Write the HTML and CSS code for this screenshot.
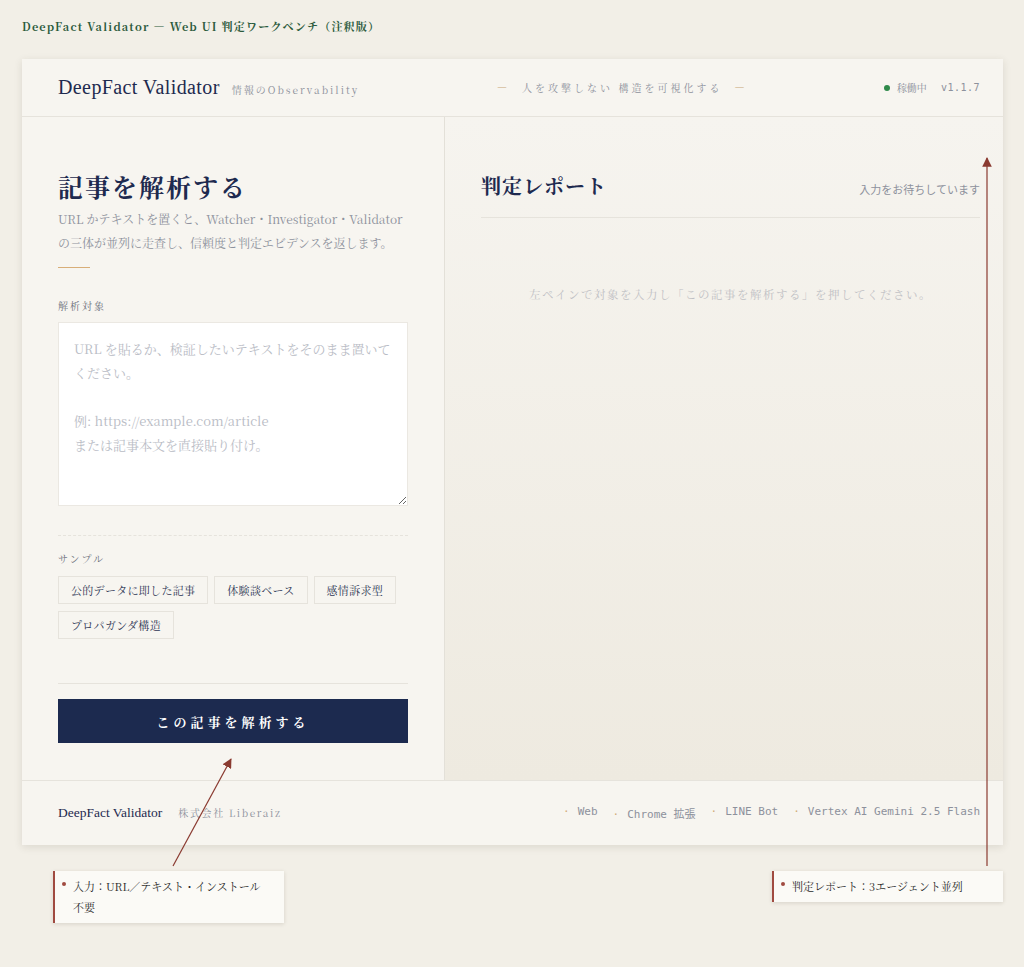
FILE: index.html
```html
<!DOCTYPE html>
<html lang="ja">
<head>
    <meta charset="UTF-8">
    <meta name="viewport" content="width=device-width, initial-scale=1.0">
    <title>DeepFact Validator</title>
    <link rel="stylesheet" href="styles.css">
</head>
<body>

<div class="page">
    <div class="caption">DeepFact Validator — Web UI 判定ワークベンチ（注釈版）</div>

    <div class="card">
        <!-- ヘッダー -->
        <header class="header">
            <div class="brand">
                <span class="logo">DeepFact Validator</span>
                <span class="sub">情報のObservability</span>
            </div>
            <div class="tagline"><span class="dash first">—</span>人を攻撃しない 構造を可視化する<span class="dash">—</span></div>
            <div class="status">
                <span class="dot"></span>
                <span class="live">稼働中</span>
                <span class="ver">v1.1.7</span>
            </div>
        </header>

        <div class="main">
            <!-- 左側：入力 -->
            <section class="pane left">
                <h1>記事を解析する</h1>
                <p class="lead">URL かテキストを置くと、Watcher・Investigator・Validator の三体が並列に走査し、信頼度と判定エビデンスを返します。</p>
                <div class="rule"></div>

                <div class="label">解析対象</div>
                <textarea class="input" placeholder="URL を貼るか、検証したいテキストをそのまま置いてください。&#10;&#10;例: https://example.com/article&#10;または記事本文を直接貼り付け。"></textarea>

                <div class="sep dashed"></div>

                <div class="label">サンプル</div>
                <div class="chips">
                    <button class="chip">公的データに即した記事</button>
                    <button class="chip">体験談ベース</button>
                    <button class="chip">感情訴求型</button>
                    <button class="chip">プロパガンダ構造</button>
                </div>

                <div class="sep solid"></div>
                <button class="run">この記事を解析する</button>
            </section>

            <!-- 右側：レポート -->
            <section class="pane right">
                <div class="report-head">
                    <h2>判定レポート</h2>
                    <span class="wait">入力をお待ちしています</span>
                </div>
                <p class="empty">左ペインで対象を入力し「この記事を解析する」を押してください。</p>
            </section>
        </div>

        <!-- フッター -->
        <footer class="footer">
            <div class="foot-brand">
                <span class="foot-logo">DeepFact Validator</span>
                <span class="company">株式会社 Liberaiz</span>
            </div>
            <ul class="channels">
                <li>Web</li>
                <li>Chrome 拡張</li>
                <li>LINE Bot</li>
                <li>Vertex AI Gemini 2.5 Flash</li>
            </ul>
        </footer>
    </div>

    <!-- 注釈 -->
    <svg class="arrows" width="1024" height="967" viewBox="0 0 1024 967">
        <defs>
            <marker id="head" viewBox="0 0 10 10" refX="9" refY="5" markerWidth="8" markerHeight="8" orient="auto">
                <path d="M0 0 L10 5 L0 10 z" fill="#8a3a30"/>
            </marker>
        </defs>
        <line x1="173" y1="866" x2="231" y2="759" stroke="#8a3a30" stroke-width="1.2" marker-end="url(#head)"/>
        <line x1="987" y1="866" x2="987" y2="158" stroke="#8a3a30" stroke-width="1.2" marker-end="url(#head)"/>
    </svg>
    <div class="note note-input">入力：URL／テキスト・インストール不要</div>
    <div class="note note-report">判定レポート：3エージェント並列</div>
</div>

</body>
</html>
```

FILE: styles.css
```css
* {
    margin: 0;
    padding: 0;
    box-sizing: border-box;
}
body {
    background-color: #f2efe7;
    color: #1c2a4f;
    font-family: "Noto Serif CJK JP", "Liberation Serif", "Noto Sans CJK JP", serif;
}
.page {
    position: relative;
    width: 1024px;
    height: 967px;
    padding: 18px 21px 0 22px;
}
.caption {
    font-size: 11px;
    font-weight: bold;
    letter-spacing: 1.2px;
    color: #2b5a3c;
    line-height: 16px;
}
.card {
    margin-top: 25px;
    background: #f7f5f0;
    box-shadow: 0 2px 8px rgba(60, 50, 30, 0.12);
    display: flex;
    flex-direction: column;
    height: 786px;
}

/* ヘッダー */
.header {
    height: 58px;
    border-bottom: 1px solid #e6e3dc;
    display: flex;
    align-items: center;
    padding: 0 23px 0 36px;
}
.brand {
    display: flex;
    align-items: baseline;
    gap: 12px;
    width: 439px;
}
.logo {
    font-family: "Liberation Serif", serif;
    font-size: 20px;
    letter-spacing: 0.4px;
    color: #1e2a4f;
}
.sub {
    font-size: 10px;
    letter-spacing: 2px;
    color: #8d919c;
}
.tagline {
    font-size: 10px;
    letter-spacing: 3px;
    color: #8d919c;
}
.tagline .dash {
    color: #c9a878;
    margin: 0 12px;
}
.tagline .dash.first {
    margin-left: 0;
}
.status {
    margin-left: auto;
    display: flex;
    align-items: center;
    font-size: 10px;
    color: #8d919c;
}
.dot {
    width: 6px;
    height: 6px;
    border-radius: 50%;
    background: #2f8a4a;
    margin-right: 7px;
}
.ver {
    font-family: "DejaVu Sans Mono", monospace;
    font-size: 10px;
    margin-left: 14px;
    letter-spacing: 0.5px;
}

/* メイン */
.main {
    flex: 1;
    display: flex;
}
.pane.left {
    width: 423px;
    border-right: 1px solid #e3e0d8;
    padding: 52px 36px 0 36px;
}
h1 {
    font-size: 25px;
    font-weight: bold;
    letter-spacing: 2px;
    line-height: 34px;
    color: #1e2a4f;
}
.lead {
    margin-top: 4px;
    font-size: 12px;
    line-height: 24px;
    color: #8d919c;
}
.rule {
    width: 32px;
    height: 1px;
    background: #d8ae78;
    margin-top: 12px;
}
.label {
    margin-top: 30px;
    font-size: 10px;
    letter-spacing: 2px;
    color: #6d717c;
}
.input {
    display: block;
    width: 100%;
    height: 184px;
    margin-top: 9px;
    padding: 14px 15px;
    border: 1px solid #ebe8e2;
    background: #fff;
    font-family: inherit;
    font-size: 13px;
    line-height: 24px;
    color: #1e2a4f;
}
.input::placeholder {
    color: #b9bcc5;
}
.sep {
    margin-top: 29px;
    border-top: 1px solid #e6e3dc;
}
.sep.dashed {
    border-top-style: dashed;
}
.sep + .label {
    margin-top: 15px;
}
.chips {
    display: flex;
    flex-wrap: wrap;
    gap: 7px 6px;
    margin-top: 10px;
}
.chip {
    height: 28px;
    padding: 0 12px;
    border: 1px solid #e6e3dc;
    background: #f7f5f0;
    font-family: inherit;
    font-size: 11px;
    letter-spacing: 0.3px;
    color: #2e3654;
    cursor: pointer;
}
.chips + .sep {
    margin-top: 44px;
}
.run {
    display: block;
    width: 100%;
    height: 44px;
    margin-top: 15px;
    border: none;
    background: #1c2a4f;
    color: #fff;
    font-family: inherit;
    font-size: 13px;
    font-weight: bold;
    letter-spacing: 4px;
    cursor: pointer;
}

.pane.right {
    flex: 1;
    padding: 54px 23px 0 36px;
    background: linear-gradient(#f6f4ef, #eeeae0);
}
.report-head {
    display: flex;
    justify-content: space-between;
    align-items: center;
    padding-bottom: 17px;
    border-bottom: 1px solid #e6e3dc;
}
h2 {
    font-size: 20px;
    font-weight: bold;
    letter-spacing: 1px;
    color: #1e2a4f;
}
.wait {
    font-family: "Noto Sans CJK JP", sans-serif;
    font-size: 11px;
    color: #8d919c;
    margin-top: 6px;
}
.empty {
    margin-top: 68px;
    text-align: center;
    font-size: 11.5px;
    letter-spacing: 1.5px;
    color: #bfc0c4;
}

/* フッター */
.footer {
    height: 65px;
    border-top: 1px solid #e6e3dc;
    display: flex;
    align-items: center;
    justify-content: space-between;
    padding: 0 23px 0 36px;
}
.foot-brand {
    display: flex;
    align-items: baseline;
    gap: 16px;
}
.foot-logo {
    font-family: "Liberation Serif", serif;
    font-size: 13.5px;
    color: #1e2a4f;
}
.company {
    font-size: 10px;
    letter-spacing: 1.6px;
    color: #8d919c;
}
.channels {
    list-style: none;
    display: flex;
    gap: 15px;
    font-family: "DejaVu Sans Mono", "Noto Sans CJK JP", monospace;
    font-size: 11px;
    color: #8d919c;
}
.channels li::before {
    content: "·";
    color: #d2ad7c;
    margin-right: 8px;
}

/* 注釈 */
.arrows {
    position: absolute;
    left: 0;
    top: 0;
    pointer-events: none;
}
.note {
    position: absolute;
    background: #fbfaf6;
    border-left: 2px solid #a04a40;
    box-shadow: 0 1px 4px rgba(60, 50, 30, 0.15);
    font-size: 11px;
    line-height: 21px;
    color: #2a2a2a;
    padding: 5px 14px 5px 18px;
}
.note::before {
    content: "";
    position: absolute;
    left: 7px;
    top: 11px;
    width: 4px;
    height: 4px;
    border-radius: 50%;
    background: #a04a40;
}
.note-input {
    left: 53px;
    top: 871px;
    width: 231px;
}
.note-report {
    left: 772px;
    top: 871px;
    width: 231px;
}
```
